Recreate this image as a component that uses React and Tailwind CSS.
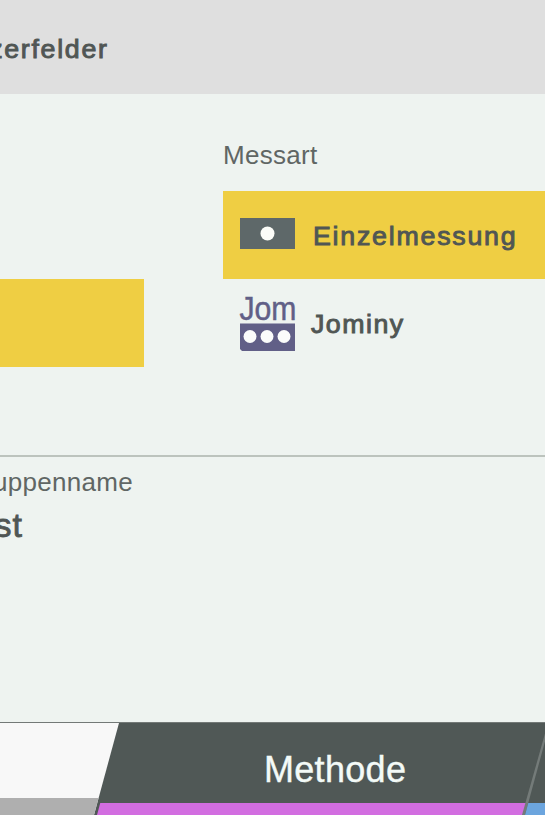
import clsx from "clsx";

const measureTypes = [
  { id: "single", label: "Einzelmessung", icon: SingleIcon, selected: true },
  { id: "jominy", label: "Jominy", icon: JominyIcon, selected: false },
];

function SingleIcon() {
  return (
    <svg className="block shrink-0 w-[55px] h-[31px]" viewBox="0 0 55 31">
      <rect width="55" height="31" fill="#5e6869" />
      <circle cx="27.5" cy="15.5" r="7" fill="#fbfcf8" />
    </svg>
  );
}

function JominyIcon() {
  return (
    <svg
      className="block shrink-0 w-[55px] h-[55px] overflow-visible"
      viewBox="0 0 55 55"
    >
      <text
        x="-0.5"
        y="24"
        fontSize="34"
        fill="#615f87"
        stroke="#615f87"
        strokeWidth="0.5"
        textLength="57"
        lengthAdjust="spacingAndGlyphs"
      >
        Jom
      </text>
      <path d="M0 27.5H55V55H2L0 53Z" fill="#615f87" />
      <circle cx="10" cy="40.5" r="6.5" fill="#fbfcfb" />
      <circle cx="27" cy="40.5" r="6.5" fill="#fbfcfb" />
      <circle cx="44" cy="40.5" r="6.5" fill="#fbfcfb" />
    </svg>
  );
}

function Header() {
  return (
    <header className="h-[94px] shrink-0 bg-[#dfdfdf] pt-[34px]">
      <div className="w-[109px] flex justify-end">
        <span className="origin-right scale-x-[1.07] text-[25px] leading-[30px] tracking-[1.6px] [-webkit-text-stroke:0.9px_#505654]">
          zerfelder
        </span>
      </div>
    </header>
  );
}

function MeasureOption({ label, icon: Icon, selected }) {
  return (
    <div
      className={clsx(
        "h-[88px] flex pl-[17px]",
        selected ? "bg-[#efce43] pt-[27px]" : "pt-[17px]"
      )}
    >
      <Icon />
      <span
        className={clsx(
          "origin-left scale-x-[1.07] text-[25px] leading-[30px] [-webkit-text-stroke:0.9px_#505654]",
          selected
            ? "ml-[18px] mt-[3px] tracking-[1.65px]"
            : "ml-[16px] mt-[13px] tracking-[1.4px]"
        )}
      >
        {label}
      </span>
    </div>
  );
}

function Tabs() {
  return (
    <nav className="h-[93px] shrink-0 flex bg-[#505856] border-t border-[#737977]">
      {/* inactive tab, cut off by the left edge */}
      <div className="w-[119px] shrink-0 flex flex-col bg-[#f8f8f8] [clip-path:polygon(0_0,100%_0,94px_100%,0_100%)]">
        <div className="h-[75px]" />
        <div className="grow bg-[#afafaf]" />
      </div>
      <div className="w-[452px] -ml-[23px] shrink-0 flex flex-col [clip-path:polygon(26px_0,100%_0,427px_100%,1px_100%)]">
        <div className="h-[80px] pt-[27px] pl-[168px] text-[36px] leading-[40px] tracking-[0.3px] text-[#f3faf7] [-webkit-text-stroke:0.4px_#f3faf7]">
          Methode
        </div>
        <div className="grow bg-[#d26de0]" />
      </div>
      {/* slanted divider and the start of the next tab */}
      <div className="w-[30px] -ml-[26px] shrink-0 bg-[#747b79] [clip-path:polygon(26px_0,30px_0,30px_100%,0_100%)]">
        <div className="h-full flex flex-col bg-[#505856] [clip-path:polygon(28px_0,30px_0,30px_100%,3px_100%)]">
          <div className="h-[80px]" />
          <div className="grow bg-[#6ca5de]" />
        </div>
      </div>
    </nav>
  );
}

export default function App() {
  return (
    <div className="w-[545px] h-[815px] overflow-hidden flex flex-col bg-[#eef3f0] text-[#505654] font-['Liberation_Sans',Arial,sans-serif]">
      <Header />

      <section className="h-[363px] shrink-0 flex gap-[79px] border-b-2 border-[#bcc3bd]">
        <div className="w-[144px] shrink-0 pt-[185px]">
          <div className="h-[88px] bg-[#efce43]" />
        </div>
        <div className="grow pt-[46px]">
          <div className="h-[51px] text-[26px] leading-[30px] tracking-[0.3px] text-[#606664]">
            Messart
          </div>
          {measureTypes.map((type) => (
            <MeasureOption key={type.id} {...type} />
          ))}
        </div>
      </section>

      <section className="grow pt-[10px]">
        <div className="w-[133px] flex justify-end text-[26px] leading-[30px] tracking-[0.3px] text-[#606664]">
          uppenname
        </div>
        <div className="w-[23px] mt-[8px] flex justify-end text-[34px] leading-[40px] tracking-[1px] [-webkit-text-stroke:0.8px_#505654]">
          st
        </div>
      </section>

      <Tabs />
    </div>
  );
}
